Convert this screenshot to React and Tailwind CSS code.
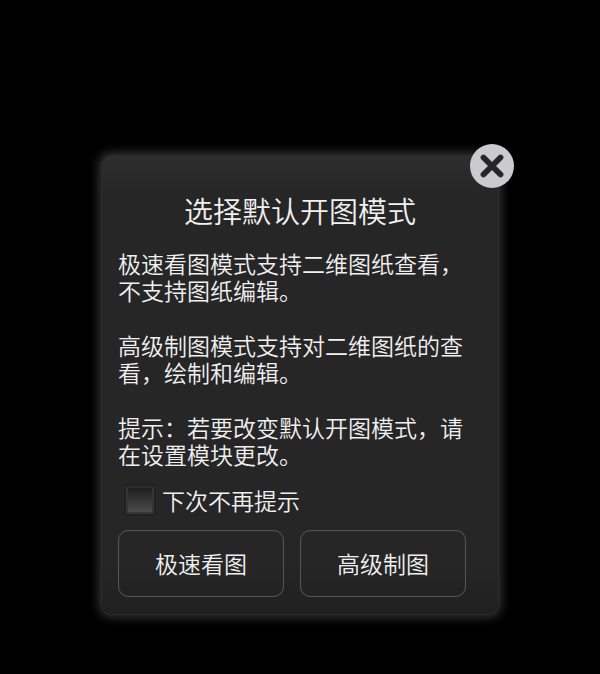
import { useState } from "react";

const paragraphs = [
  "极速看图模式支持二维图纸查看，不支持图纸编辑。",
  "高级制图模式支持对二维图纸的查看，绘制和编辑。",
  "提示：若要改变默认开图模式，请在设置模块更改。",
];

function ModeButton({ children }) {
  return (
    <button
      type="button"
      className="h-[67px] flex-1 rounded-[10px] border border-[#545454] text-[23px] text-[#f0f0f0] shadow-[inset_0_0_1px_0_#4a4a4a]"
    >
      {children}
    </button>
  );
}

export default function App() {
  const [skip, setSkip] = useState(false);
  return (
    <main className="flex min-h-screen items-start justify-center bg-black px-6 pt-[156px] pb-10 font-['Noto_Sans_CJK_SC',sans-serif] font-[350] text-[#f0f0f0]">
      <section
        role="dialog"
        aria-labelledby="mode-title"
        className="relative w-full max-w-[396px] rounded-[10px] bg-[linear-gradient(to_bottom,#2e2e2e_0,#262626_40px,#262626_calc(100%-50px),#202020_100%)] px-4 pt-[34px] pb-[17px] shadow-[0_0_0_1px_#2c2c2c,0_0_10px_4px_#303030]"
      >
        <button
          type="button"
          aria-label="关闭"
          className="absolute -top-3 -right-4 size-11 rounded-full bg-[#cbcbcd]"
        >
          <svg viewBox="0 0 44 44" className="size-11" fill="none">
            <path
              d="M13.5 13.5L30.5 30.5M30.5 13.5L13.5 30.5"
              stroke="#262628"
              strokeWidth="5.8"
              strokeLinecap="round"
            />
          </svg>
        </button>

        <h1 id="mode-title" className="text-center text-[29px] leading-10">
          选择默认开图模式
        </h1>

        <div className="mt-5 flex max-w-[350px] flex-col gap-7 text-[23px] leading-[27px]">
          {paragraphs.map((text) => (
            <p key={text}>{text}</p>
          ))}
        </div>

        <label className="mt-4 flex w-fit items-center gap-2 pl-2 text-[23px] leading-8">
          <input
            type="checkbox"
            checked={skip}
            onChange={(e) => setSkip(e.target.checked)}
            className="size-7 appearance-none rounded-xs border-2 border-[#353535] border-t-[#2e2e2e] bg-linear-to-b from-[#1f1f1f] to-[#4c4c4c] shadow-[0_0_2px_1px_#1e1e1e] checked:from-[#777] checked:to-[#aaa]"
          />
          下次不再提示
        </label>

        <div className="mt-3.5 flex gap-4 pr-4">
          <ModeButton>极速看图</ModeButton>
          <ModeButton>高级制图</ModeButton>
        </div>
      </section>
    </main>
  );
}
